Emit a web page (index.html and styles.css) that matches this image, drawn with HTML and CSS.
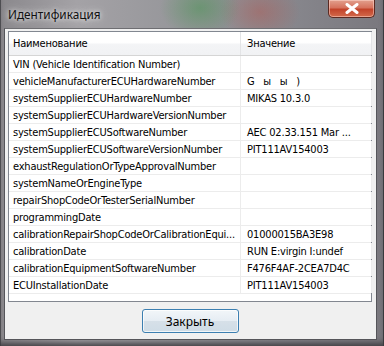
FILE: index.html
```html
<!DOCTYPE html>
<html>
<head>
<meta charset="utf-8">
<title>Идентификация</title>
<link rel="stylesheet" href="styles.css">
</head>
<body>
<div class="window">
    <div class="titlebar">
        <span class="title">Идентификация</span>
        <a class="close-btn" href="javascript:void(0)">
            <svg width="14" height="11" viewBox="0 0 14 11"><path d="M2 1.5 L12 9.5 M12 1.5 L2 9.5" stroke="#fff" stroke-width="3" stroke-linecap="round"/></svg>
        </a>
    </div>
    <div class="client">
        <div class="list">
            <div class="list-head">
                <span class="col-name">Наименование</span>
                <span class="col-value">Значение</span>
                <span class="col-rest"></span>
            </div>
            <div class="row"><span class="col-name">VIN (Vehicle Identification Number)</span><span class="col-value"></span></div>
            <div class="row"><span class="col-name">vehicleManufacturerECUHardwareNumber</span><span class="col-value spaced">G   ы   ы   )</span></div>
            <div class="row"><span class="col-name">systemSupplierECUHardwareNumber</span><span class="col-value">MIKAS 10.3.0</span></div>
            <div class="row"><span class="col-name">systemSupplierECUHardwareVersionNumber</span><span class="col-value"></span></div>
            <div class="row"><span class="col-name">systemSupplierECUSoftwareNumber</span><span class="col-value">AEC 02.33.151  Mar ...</span></div>
            <div class="row"><span class="col-name">systemSupplierECUSoftwareVersionNumber</span><span class="col-value">PIT111AV154003</span></div>
            <div class="row"><span class="col-name">exhaustRegulationOrTypeApprovalNumber</span><span class="col-value"></span></div>
            <div class="row"><span class="col-name">systemNameOrEngineType</span><span class="col-value"></span></div>
            <div class="row"><span class="col-name">repairShopCodeOrTesterSerialNumber</span><span class="col-value"></span></div>
            <div class="row"><span class="col-name">programmingDate</span><span class="col-value"></span></div>
            <div class="row"><span class="col-name">calibrationRepairShopCodeOrCalibrationEqui...</span><span class="col-value">01000015BA3E98</span></div>
            <div class="row"><span class="col-name">calibrationDate</span><span class="col-value">RUN E:virgin I:undef</span></div>
            <div class="row"><span class="col-name">calibrationEquipmentSoftwareNumber</span><span class="col-value">F476F4AF-2CEA7D4C</span></div>
            <div class="row"><span class="col-name">ECUInstallationDate</span><span class="col-value">PIT111AV154003</span></div>
        </div>
        <div class="buttons">
            <a class="btn" href="javascript:void(0)">Закрыть</a>
        </div>
    </div>
</div>
</body>
</html>
```

FILE: styles.css
```css
body,div,span,a{ margin:0; padding:0;}
a{ text-decoration:none; color:#000;}
body{ width:384px; height:346px; overflow:hidden; background:#5a5a5e;}
.window{
    width:384px; height:346px; box-sizing:border-box;
    display:flex; flex-direction:column;
    padding:0 6px 6px 4px;
    background:
        radial-gradient(ellipse 40px 30px at 200px 8px, rgba(60,150,70,.45), transparent),
        radial-gradient(ellipse 40px 30px at 260px 12px, rgba(190,70,60,.35), transparent),
        linear-gradient(90deg, #8a888c 0%, #a4a2a6 20%, #97979b 45%, #8a8a90 70%, #7a787e 100%);
    border-right:1px solid #3a3a3e;
    box-shadow:inset 0 -6px 6px -3px #3e3c40, inset 1px 0 #505054;
}
.titlebar{ display:flex; align-items:flex-start; justify-content:space-between; height:28px; flex:none;}
.title{ font:11.8px "Noto Sans", "Open Sans", sans-serif; color:#111; padding:6px 0 0 4px; text-shadow:0 0 8px #ddd, 0 0 4px #eee;}
.close-btn{
    display:flex; align-items:center; justify-content:center;
    width:47px; height:18px; margin-right:2px; box-sizing:border-box;
    border:1px solid #5b2a22; border-top:none; border-radius:0 0 5px 5px;
    background:linear-gradient(#e2a08e 0%, #d6735e 45%, #c2432a 55%, #d36a4b 100%);
    box-shadow:inset 0 0 0 1px rgba(255,220,210,.5);
}
.client{
    flex:1; display:flex; flex-direction:column;
    background:#f0f0f0; padding:2px 4px 0 3px;
    border:1px solid #55555a; border-top-color:#6e6e72;
}
.list{
    height:271px; box-sizing:border-box; border:1px solid #828790; background:#fff;
    font:11px Tahoma, "DejaVu Sans Condensed", "Liberation Sans", sans-serif; color:#000;
    letter-spacing:-0.2px;
}
.list-head{ display:flex; height:24px; background:linear-gradient(#fff 0%, #fff 45%, #f3f4f6 55%, #f1f2f4 100%); border-bottom:1px solid #d5d5d5; box-sizing:border-box;}
.list-head span{ display:flex; align-items:center; border-right:1px solid #e3e4e6;}
.row{ display:flex; height:17px; box-sizing:border-box; border-bottom:1px solid #ececec;}
.row span{ display:flex; align-items:center; border-right:1px solid #ececec;}
.col-name{ width:232px; padding-left:4px; box-sizing:border-box; overflow:hidden; white-space:nowrap; flex:none;}
.col-value{ width:131px; padding-left:6px; box-sizing:border-box; overflow:hidden; white-space:nowrap; flex:none;}
.list-head .col-rest{ flex:1; border-right:none;}
.spaced{ white-space:pre;}
.buttons{ flex:1; display:flex; justify-content:center; align-items:flex-start; padding-top:7px;}
.btn{
    display:flex; align-items:center; justify-content:center;
    width:97px; height:24px; box-sizing:border-box;
    border:1px solid #3c7fb1; border-radius:3px;
    background:linear-gradient(#f2f6f9 0%, #e6edf3 48%, #d6e0e8 52%, #cfdce6 100%);
    box-shadow:inset 0 0 0 1px rgba(255,255,255,.7);
    font:12px "Noto Sans", "Open Sans", sans-serif; color:#000;
}
```
